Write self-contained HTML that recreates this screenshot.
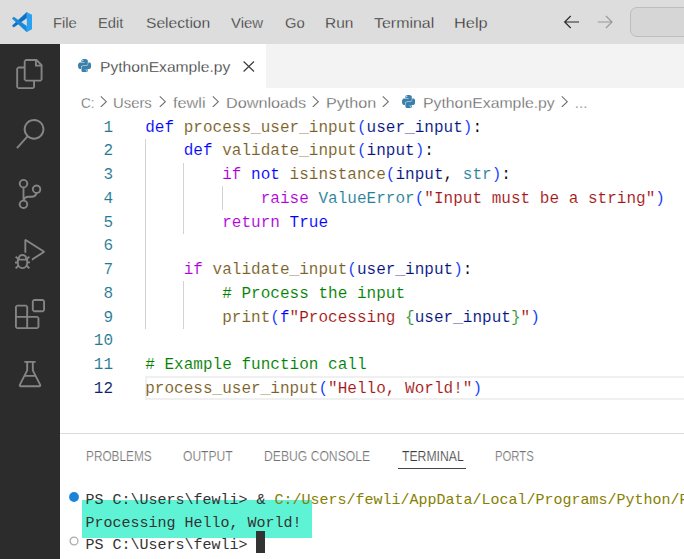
<!DOCTYPE html>
<html>
<head>
<meta charset="utf-8">
<title>PythonExample.py - Visual Studio Code</title>
<style>
html,body{margin:0;padding:0;}
body{width:684px;height:559px;overflow:hidden;position:relative;background:#ffffff;font-family:"Liberation Sans",sans-serif;}
.abs{position:absolute;white-space:pre;}
#titlebar{position:absolute;left:0;top:0;width:684px;height:44px;background:#dddddd;}
.menu{-webkit-text-stroke:0.28px #dddddd;position:absolute;top:13px;transform-origin:0 50%;font-size:15.4px;line-height:20px;color:#333333;white-space:pre;}
#searchbox{position:absolute;left:630px;top:7px;width:70px;height:30px;border:1px solid #bdbdbd;border-radius:7px;background:#d6d6d6;box-sizing:border-box;}
#activity{position:absolute;left:0;top:44px;width:60px;height:515px;background:#2c2c2c;}
#tabstrip{position:absolute;left:60px;top:44px;width:624px;height:44px;background:#f3f3f3;}
#tab{position:absolute;left:0;top:0;width:206px;height:44px;background:#ffffff;}
.tabtext{-webkit-text-stroke:0.26px #ffffff;position:absolute;top:57.1px;transform-origin:0 50%;font-size:15.4px;line-height:20px;color:#2e2e2e;white-space:pre;}
.bc{-webkit-text-stroke:0.26px #ffffff;position:absolute;top:92.5px;transform-origin:0 50%;font-size:15.2px;line-height:20px;color:#636363;white-space:pre;}
#code{-webkit-text-stroke:0.1px #ffffff;position:absolute;left:0;top:0;font-family:"Liberation Mono","DejaVu Sans Mono",monospace;font-size:16px;}
.ln{position:absolute;left:60px;width:53px;text-align:right;color:#237893;height:23.75px;line-height:23.75px;white-space:pre;}
.ln.cur{color:#0b216f;}
.cl{position:absolute;left:145.2px;height:23.75px;line-height:23.75px;white-space:pre;color:#000000;letter-spacing:0.022px;}
.k{color:#0000ff}.c{color:#af00db}.f{color:#795e26}.v{color:#001080}.t{color:#267f99}.s{color:#a31515}.m{color:#008000}.b{color:#0431fa}.g{color:#319331}
.guide{position:absolute;width:1px;background:#d3d3d3;}
#curline{position:absolute;left:145px;top:376.1px;width:539px;height:23.8px;box-sizing:border-box;border:2px solid #f0f0f0;border-right:none;}
#panelborder{position:absolute;left:60px;top:433px;width:624px;height:1px;background:#dadada;}
.pt{-webkit-text-stroke:0.22px #ffffff;position:absolute;top:446px;transform-origin:0 50%;font-size:14px;line-height:20px;color:#707070;white-space:pre;}
.pt.act{color:#3b3b3b;}
#ptul{position:absolute;left:398px;top:468px;width:68px;height:1.3px;background:#444;}
.term{position:absolute;left:85.5px;font-family:"Liberation Mono","DejaVu Sans Mono",monospace;font-size:15px;line-height:22.5px;height:22.5px;white-space:pre;color:#333333;}
.y{color:#868000}
#hl{position:absolute;left:82px;top:500px;width:230px;height:37.5px;background:#5ff3d6;}
#cursor{position:absolute;left:256px;top:531px;width:9px;height:21.7px;background:#333333;}
</style>
</head>
<body>
<div id="titlebar">
  <svg class="abs" style="left:11.9px;top:11.75px" width="20.35" height="20.2" viewBox="0 0 100 100">
    <path d="M73 0.7 L73 29.5 L8.5 75 L0.5 67.6 Z" fill="#0c70c3" stroke="#0c70c3" stroke-width="2" stroke-linejoin="round"/>
    <path d="M0.5 32 L8.5 25 L73 70 L73 99 Z" fill="#1689d9" stroke="#1689d9" stroke-width="2" stroke-linejoin="round"/>
    <path d="M73 0.7 L100 14.7 V84.8 L73 99.3 Z" fill="#2ba1f1"/>
  </svg>
  <span id="m1" class="menu" style="left:53.23px;transform:scaleX(0.9583)">File</span>
  <span id="m2" class="menu" style="left:98.04px;transform:scaleX(0.9582)">Edit</span>
  <span id="m3" class="menu" style="left:145.79px;transform:scaleX(1.0144)">Selection</span>
  <span id="m4" class="menu" style="left:231.00px;transform:scaleX(0.9706)">View</span>
  <span id="m5" class="menu" style="left:285.17px;transform:scaleX(0.9631)">Go</span>
  <span id="m6" class="menu" style="left:325.19px;transform:scaleX(1.0042)">Run</span>
  <span id="m7" class="menu" style="left:374.00px;transform:scaleX(1.0363)">Terminal</span>
  <span id="m8" class="menu" style="left:453.77px;transform:scaleX(1.0616)">Help</span>
  <svg class="abs" style="left:562px;top:13px" width="20" height="18" viewBox="0 0 20 18"><path d="M17 9 H3 M8.7 3 L2.7 9 L8.7 15" fill="none" stroke="#2b2b2b" stroke-width="1.2"/></svg>
  <svg class="abs" style="left:595px;top:13px" width="20" height="18" viewBox="0 0 20 18"><path d="M2.7 9 H16.7 M11 3 L17 9 L11 15" fill="none" stroke="#9a9a9a" stroke-width="1.2"/></svg>
  <div id="searchbox"></div>
</div>

<div id="activity">
  <svg class="abs" style="left:15px;top:15px" width="30" height="30" viewBox="0 0 24 24"><path fill="#858585" d="M17.5 0h-9L7 1.5V6H2.5L1 7.5v15.07L2.5 24h12.07L16 22.57V18h4.7l1.3-1.43V4.5L17.5 0zm0 2.12l2.38 2.38H17.5V2.12zm-3 20.38h-12v-15H7v9.07L8.5 18h6v4.5zm6-6h-12v-15H16V6h4.5v10.5z"/></svg>
  <svg class="abs" style="left:15px;top:75.0px" width="30" height="30" viewBox="0 0 24 24"><path fill="#858585" d="M15.25 0a8.25 8.25 0 0 0-6.18 13.72L1 22.88l1.12 1 8.05-9.12A8.251 8.251 0 1 0 15.25.01V0zm0 15a6.75 6.75 0 1 1 0-13.5 6.75 6.75 0 0 1 0 13.5z"/></svg>
  <svg class="abs" style="left:15px;top:135.0px" width="30" height="30" viewBox="0 0 24 24"><path fill="#858585" d="M21.007 8.222A3.738 3.738 0 0 0 15.045 5.2a3.737 3.737 0 0 0 1.156 6.583 2.988 2.988 0 0 1-2.668 1.67h-2.99a4.456 4.456 0 0 0-2.989 1.165V7.4a3.737 3.737 0 1 0-1.494 0v9.117a3.776 3.776 0 1 0 1.816.099 2.99 2.99 0 0 1 2.668-1.667h2.99a4.484 4.484 0 0 0 4.223-3.039 3.736 3.736 0 0 0 3.25-3.687zM4.565 3.738a2.242 2.242 0 1 1 4.484 0 2.242 2.242 0 0 1-4.484 0zm4.484 16.441a2.242 2.242 0 1 1-4.484 0 2.242 2.242 0 0 1 4.484 0zm8.221-9.715a2.242 2.242 0 1 1 0-4.485 2.242 2.242 0 0 1 0 4.485z"/></svg>
  <svg class="abs" style="left:15px;top:195.0px" width="30" height="30" viewBox="0 0 24 24"><path fill="#858585" d="M10.94 13.5l-1.32 1.32a3.73 3.73 0 0 0-7.24 0L1.06 13.5 0 14.56l1.72 1.72-.22.22V18H0v1.5h1.5v.08c.077.489.214.966.41 1.42L0 22.94 1.06 24l1.65-1.65A4.308 4.308 0 0 0 6 24a4.31 4.31 0 0 0 3.29-1.65L10.94 24 12 22.94 10.09 21c.198-.464.336-.951.41-1.45v-.1H12V18h-1.5v-1.5l-.22-.22L12 14.56l-1.06-1.06zM6 13.5a2.25 2.25 0 0 1 2.25 2.25h-4.5A2.25 2.25 0 0 1 6 13.5zm3 6a3.33 3.33 0 0 1-3 3 3.33 3.33 0 0 1-3-3v-2.25h6v2.25zm14.76-9.9v1.26L13.5 17.37V15.6l8.5-5.37L9 2v9.46a5.07 5.07 0 0 0-1.5-.72V.63L8.64 0l15.12 9.6z"/></svg>
  <svg class="abs" style="left:15px;top:255.0px" width="30" height="30" viewBox="0 0 24 24"><path fill="#858585" d="M13.5 1.5L15 0h7.5L24 1.5V9l-1.5 1.5H15L13.5 9V1.5zm1.5 0V9h7.5V1.5H15zM0 15V6l1.5-1.5H9L10.5 6v7.5H18l1.5 1.5v7.5L18 24H1.5L0 22.500V15zm9-1.5V6H1.500v7.5H9zM9 15H1.500v7.5H9V15zm1.500 7.500H18V15h-7.500v7.500z"/></svg>
  <svg class="abs" style="left:15px;top:315.0px" width="30" height="30" viewBox="0 0 16 16"><path fill="#858585" d="M13.893 13.558L10 6.006v-4h1v-1H9.994V1H9v.006H7V1H6v.006H5v1h1v3.989l-3.888 7.560A1 1 0 0 0 3 15h10a1 1 0 0 0 .893-1.442zM7 6.237V2.006h2v4.230l.11.216 1.063 2.063H5.827L6.889 6.450 7 6.237zM3 14l2.312-4.485h5.376L13 14H3z"/></svg>
</div>

<div id="tabstrip">
  <div id="tab"></div>
</div>
<span id="t1" class="tabtext" style="left:99.98px;transform:scaleX(1.0156)">PythonExample.py</span>

<svg class="abs" style="left:78px;top:58.5px" width="13.2" height="13.2" viewBox="0 0 110.4 110.4"><path fill="#3b7fab" fill-rule="evenodd" d="M54.9 0C50.3 0 45.9 .4 42.1 1.1 30.8 3.1 28.7 7.3 28.7 15v10.2h26.8v3.4H18.700C10.900 28.600 4.100 33.300 2 42.200-.5 52.400-.6 58.800 2 69.500 3.900 77.400 8.400 83 16.200 83h9.200V70.800c0-8.800 7.600-16.600 16.700-16.600h26.700c7.500 0 13.400-6.100 13.400-13.600V15c0-7.200-6.100-12.700-13.400-13.900C64.200.3 59.500 0 54.900 0zM40.400 8.200c2.800 0 5 2.300 5 5.100 0 2.800-2.200 5-5 5s-5-2.200-5-5c0-2.800 2.200-5.100 5-5.100z"/><path fill="#3b7fab" fill-rule="evenodd" d="M85.600 28.600v12c0 9.200-7.800 17-16.800 17H42.100c-7.300 0-13.400 6.300-13.400 13.600v25.500c0 7.300 6.300 11.500 13.400 13.600 8.500 2.500 16.600 3 26.700 0 6.800-1.900 13.400-5.900 13.400-13.600V86.500H55.500v-3.400h40.100c7.800 0 10.700-5.400 13.400-13.600 2.800-8.400 2.700-16.500 0-27.300-1.900-7.700-5.600-13.600-13.400-13.600h-10zM70.600 93.300c2.800 0 5 2.300 5 5.100 0 2.800-2.200 5.100-5 5.100s-5-2.300-5-5.100c0-2.800 2.200-5.100 5-5.100z"/></svg>
<svg class="abs" style="left:243px;top:60.5px" width="12" height="11" viewBox="0 0 12 11"><path d="M0.6 0.5 L11 10.5 M11 0.5 L0.6 10.5" fill="none" stroke="#3b3b3b" stroke-width="1.15"/></svg>
<svg class="abs" style="left:401.8px;top:94.8px" width="13.2" height="13.2" viewBox="0 0 110.4 110.4"><path fill="#3b7fab" fill-rule="evenodd" d="M54.9 0C50.3 0 45.9 .4 42.1 1.1 30.8 3.1 28.7 7.3 28.7 15v10.2h26.8v3.4H18.700C10.900 28.600 4.100 33.300 2 42.200-.5 52.400-.6 58.800 2 69.500 3.900 77.400 8.400 83 16.200 83h9.200V70.800c0-8.800 7.600-16.600 16.700-16.600h26.700c7.500 0 13.400-6.100 13.400-13.600V15c0-7.200-6.100-12.700-13.400-13.900C64.200.3 59.500 0 54.900 0zM40.400 8.200c2.800 0 5 2.300 5 5.100 0 2.800-2.200 5-5 5s-5-2.200-5-5c0-2.800 2.200-5.100 5-5.100z"/><path fill="#3b7fab" fill-rule="evenodd" d="M85.600 28.600v12c0 9.200-7.800 17-16.800 17H42.100c-7.300 0-13.400 6.300-13.400 13.600v25.500c0 7.300 6.300 11.500 13.400 13.600 8.500 2.500 16.600 3 26.700 0 6.800-1.900 13.400-5.900 13.400-13.600V86.500H55.500v-3.400h40.100c7.800 0 10.700-5.400 13.400-13.600 2.800-8.400 2.700-16.500 0-27.300-1.900-7.700-5.600-13.600-13.400-13.600h-10zM70.600 93.300c2.800 0 5 2.300 5 5.100 0 2.800-2.200 5.100-5 5.100s-5-2.300-5-5.100c0-2.800 2.200-5.100 5-5.100z"/></svg>
<svg class="abs" style="left:99.9px;top:96.1px" width="8" height="11.4" viewBox="0 0 8 11.4"><path d="M0.8 0.4 L6.3 5.7 L0.8 11" fill="none" stroke="#707070" stroke-width="1.1"/></svg>
<svg class="abs" style="left:158.7px;top:96.1px" width="8" height="11.4" viewBox="0 0 8 11.4"><path d="M0.8 0.4 L6.3 5.7 L0.8 11" fill="none" stroke="#707070" stroke-width="1.1"/></svg>
<svg class="abs" style="left:212.4px;top:96.1px" width="8" height="11.4" viewBox="0 0 8 11.4"><path d="M0.8 0.4 L6.3 5.7 L0.8 11" fill="none" stroke="#707070" stroke-width="1.1"/></svg>
<svg class="abs" style="left:312.4px;top:96.1px" width="8" height="11.4" viewBox="0 0 8 11.4"><path d="M0.8 0.4 L6.3 5.7 L0.8 11" fill="none" stroke="#707070" stroke-width="1.1"/></svg>
<svg class="abs" style="left:382.4px;top:96.1px" width="8" height="11.4" viewBox="0 0 8 11.4"><path d="M0.8 0.4 L6.3 5.7 L0.8 11" fill="none" stroke="#707070" stroke-width="1.1"/></svg>
<svg class="abs" style="left:561.4px;top:96.1px" width="8" height="11.4" viewBox="0 0 8 11.4"><path d="M0.8 0.4 L6.3 5.7 L0.8 11" fill="none" stroke="#707070" stroke-width="1.1"/></svg>
<span id="b1" class="bc" style="left:81.25px;transform:scaleX(0.8943)">C:</span>
<span id="b2" class="bc" style="left:113.21px;transform:scaleX(0.9772)">Users</span>
<span id="b3" class="bc" style="left:173.22px;transform:scaleX(1.0736)">fewli</span>
<span id="b4" class="bc" style="left:225.78px;transform:scaleX(1.0668)">Downloads</span>
<span id="b5" class="bc" style="left:325.79px;transform:scaleX(1.0632)">Python</span>
<span id="b6" class="bc" style="left:423.17px;transform:scaleX(1.0405)">PythonExample.py</span>
<span id="b7" class="bc" style="left:574.80px;transform:scaleX(1.0000)">...</span>

<div id="code">
<div id="curline"></div>
<div class="guide" style="left:145px;top:138.75px;height:190.00px"></div>
<div class="guide" style="left:183px;top:162.50px;height:71.25px"></div>
<div class="guide" style="left:222px;top:186.25px;height:23.75px"></div>
<div class="guide" style="left:183px;top:281.25px;height:47.50px"></div>
<span class="ln" style="top:116.70px">1</span><span class="cl" style="top:116.70px"><span class="k">def</span> <span class="f">process_user_input</span><span class="b">(</span><span class="v">user_input</span><span class="b">)</span>:</span>
<span class="ln" style="top:140.45px">2</span><span class="cl" style="top:140.45px">    <span class="k">def</span> <span class="f">validate_input</span><span class="b">(</span><span class="v">input</span><span class="b">)</span>:</span>
<span class="ln" style="top:164.20px">3</span><span class="cl" style="top:164.20px">        <span class="c">if</span> <span class="k">not</span> <span class="f">isinstance</span><span class="b">(</span><span class="v">input</span>, <span class="t">str</span><span class="b">)</span>:</span>
<span class="ln" style="top:187.95px">4</span><span class="cl" style="top:187.95px">            <span class="c">raise</span> <span class="t">ValueError</span><span class="b">(</span><span class="s">"Input must be a string"</span><span class="b">)</span></span>
<span class="ln" style="top:211.70px">5</span><span class="cl" style="top:211.70px">        <span class="c">return</span> <span class="k">True</span></span>
<span class="ln" style="top:235.45px">6</span>
<span class="ln" style="top:259.20px">7</span><span class="cl" style="top:259.20px">    <span class="c">if</span> <span class="f">validate_input</span><span class="b">(</span><span class="v">user_input</span><span class="b">)</span>:</span>
<span class="ln" style="top:282.95px">8</span><span class="cl" style="top:282.95px">        <span class="m"># Process the input</span></span>
<span class="ln" style="top:306.70px">9</span><span class="cl" style="top:306.70px">        <span class="f">print</span><span class="b">(</span><span class="k">f</span><span class="s">"Processing </span><span class="g">{</span><span class="v">user_input</span><span class="g">}</span><span class="s">"</span><span class="b">)</span></span>
<span class="ln" style="top:330.45px">10</span>
<span class="ln" style="top:354.20px">11</span><span class="cl" style="top:354.20px"><span class="m"># Example function call</span></span>
<span class="ln cur" style="top:377.95px">12</span><span class="cl" style="top:377.95px"><span class="f">process_user_input</span><span class="b">(</span><span class="s">"Hello, World!"</span><span class="b">)</span></span>
</div>

<div id="panelborder"></div>
<span id="p1" class="pt" style="left:85.84px;transform:scaleX(0.8443)">PROBLEMS</span>
<span id="p2" class="pt" style="left:182.84px;transform:scaleX(0.8621)">OUTPUT</span>
<span id="p3" class="pt" style="left:264.29px;transform:scaleX(0.8687)">DEBUG CONSOLE</span>
<span id="p4" class="pt act" style="left:401.70px;transform:scaleX(0.8725)">TERMINAL</span>
<span id="p5" class="pt" style="left:495.17px;transform:scaleX(0.8090)">PORTS</span>
<div id="ptul"></div>

<div id="hl"></div>
<span class="term" style="top:490.2px">PS C:\Users\fewli&gt; &amp; <span class="y">C:/Users/fewli/AppData/Local/Programs/Python/Python312/python.exe</span></span>
<span class="term" style="top:512.6px">Processing Hello, World!</span>
<span class="term" style="top:535px">PS C:\Users\fewli&gt; </span>
<div id="cursor"></div>
<svg class="abs" style="left:66.8px;top:490.3px" width="14" height="14" viewBox="0 0 14 14"><circle cx="7" cy="7" r="4.9" fill="#1a85d8"/></svg>
<svg class="abs" style="left:66.8px;top:534.4px" width="14" height="14" viewBox="0 0 14 14"><circle cx="7" cy="7" r="3.9" fill="none" stroke="#adadad" stroke-width="1.3"/></svg>
</body>
</html>
